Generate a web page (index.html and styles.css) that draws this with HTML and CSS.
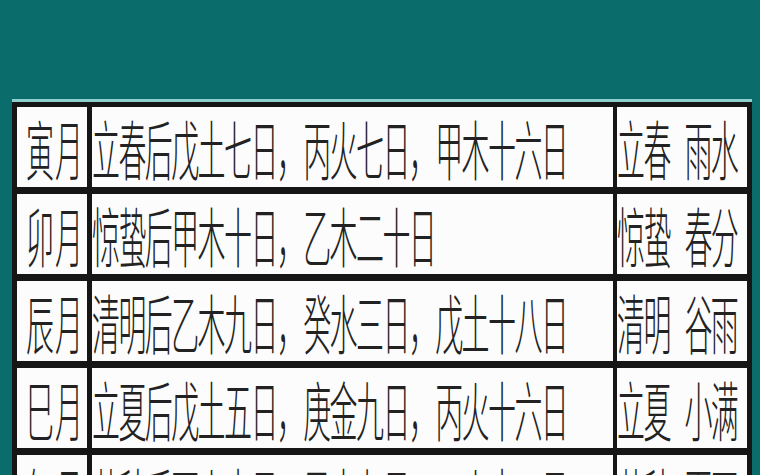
FILE: index.html
```html
<!DOCTYPE html>
<html lang="zh">
<head>
<meta charset="utf-8">
<link rel="stylesheet" href="styles.css">
</head>
<body>
<div class="page">
  <div class="table">
    <div class="row">
      <div class="cell c1"><span class="t">寅月</span></div>
      <div class="cell c2"><span class="t">立春后戊土七日，丙火七日，甲木十六日</span></div>
      <div class="cell c3"><span class="t">立春 雨水</span></div>
    </div>
    <div class="row">
      <div class="cell c1"><span class="t">卯月</span></div>
      <div class="cell c2"><span class="t">惊蛰后甲木十日，乙木二十日</span></div>
      <div class="cell c3"><span class="t">惊蛰 春分</span></div>
    </div>
    <div class="row">
      <div class="cell c1"><span class="t">辰月</span></div>
      <div class="cell c2"><span class="t">清明后乙木九日，癸水三日，戊土十八日</span></div>
      <div class="cell c3"><span class="t">清明 谷雨</span></div>
    </div>
    <div class="row">
      <div class="cell c1"><span class="t">巳月</span></div>
      <div class="cell c2"><span class="t">立夏后戊土五日，庚金九日，丙火十六日</span></div>
      <div class="cell c3"><span class="t">立夏 小满</span></div>
    </div>
    <div class="row">
      <div class="cell c1"><span class="t">午月</span></div>
      <div class="cell c2"><span class="t">芒种后丙火十日，己土九日，丁火十一日</span></div>
      <div class="cell c3"><span class="t">芒种 夏至</span></div>
    </div>
  </div>
</div>
</body>
</html>
```

FILE: styles.css
```css
html, body {
  margin: 0;
  padding: 0;
}
body {
  width: 760px;
  height: 475px;
  overflow: hidden;
  background: #0a6c6b;
  font-family: "Noto Sans CJK SC", "Noto Sans", sans-serif;
  color: #222222;
}
.page {
  padding: 99px 0 0 12px;
}
.table {
  width: 740px;
  border-top: 3px solid #8fcfcd;
  box-sizing: border-box;
}
.row {
  display: grid;
  grid-template-columns: 80px 525px 135px;
  height: 87px;
  box-sizing: border-box;
  border-bottom: 7px solid #161616;
  background: #fcfcfc;
}
.row:first-child {
  height: 92px;
  border-top: 5px solid #161616;
}
.cell {
  display: flex;
  align-items: center;
  box-sizing: border-box;
}
.c1 {
  border-left: 5px solid #161616;
  border-right: 5px solid #161616;
  padding-left: 9px;
}
.c2 {
  border-right: 4px solid #161616;
}
.c3 {
  border-right: 5px solid #161616;
}
.t {
  display: inline-block;
  font-size: 28px;
  font-weight: 300;
  line-height: 28px;
  letter-spacing: -1.6px;
  white-space: nowrap;
  transform: scaleY(2.3);
  transform-origin: 50% 50%;
}
.c1 .t {
  letter-spacing: 1px;
}
.c3 .t {
  word-spacing: 10px;
}
```
